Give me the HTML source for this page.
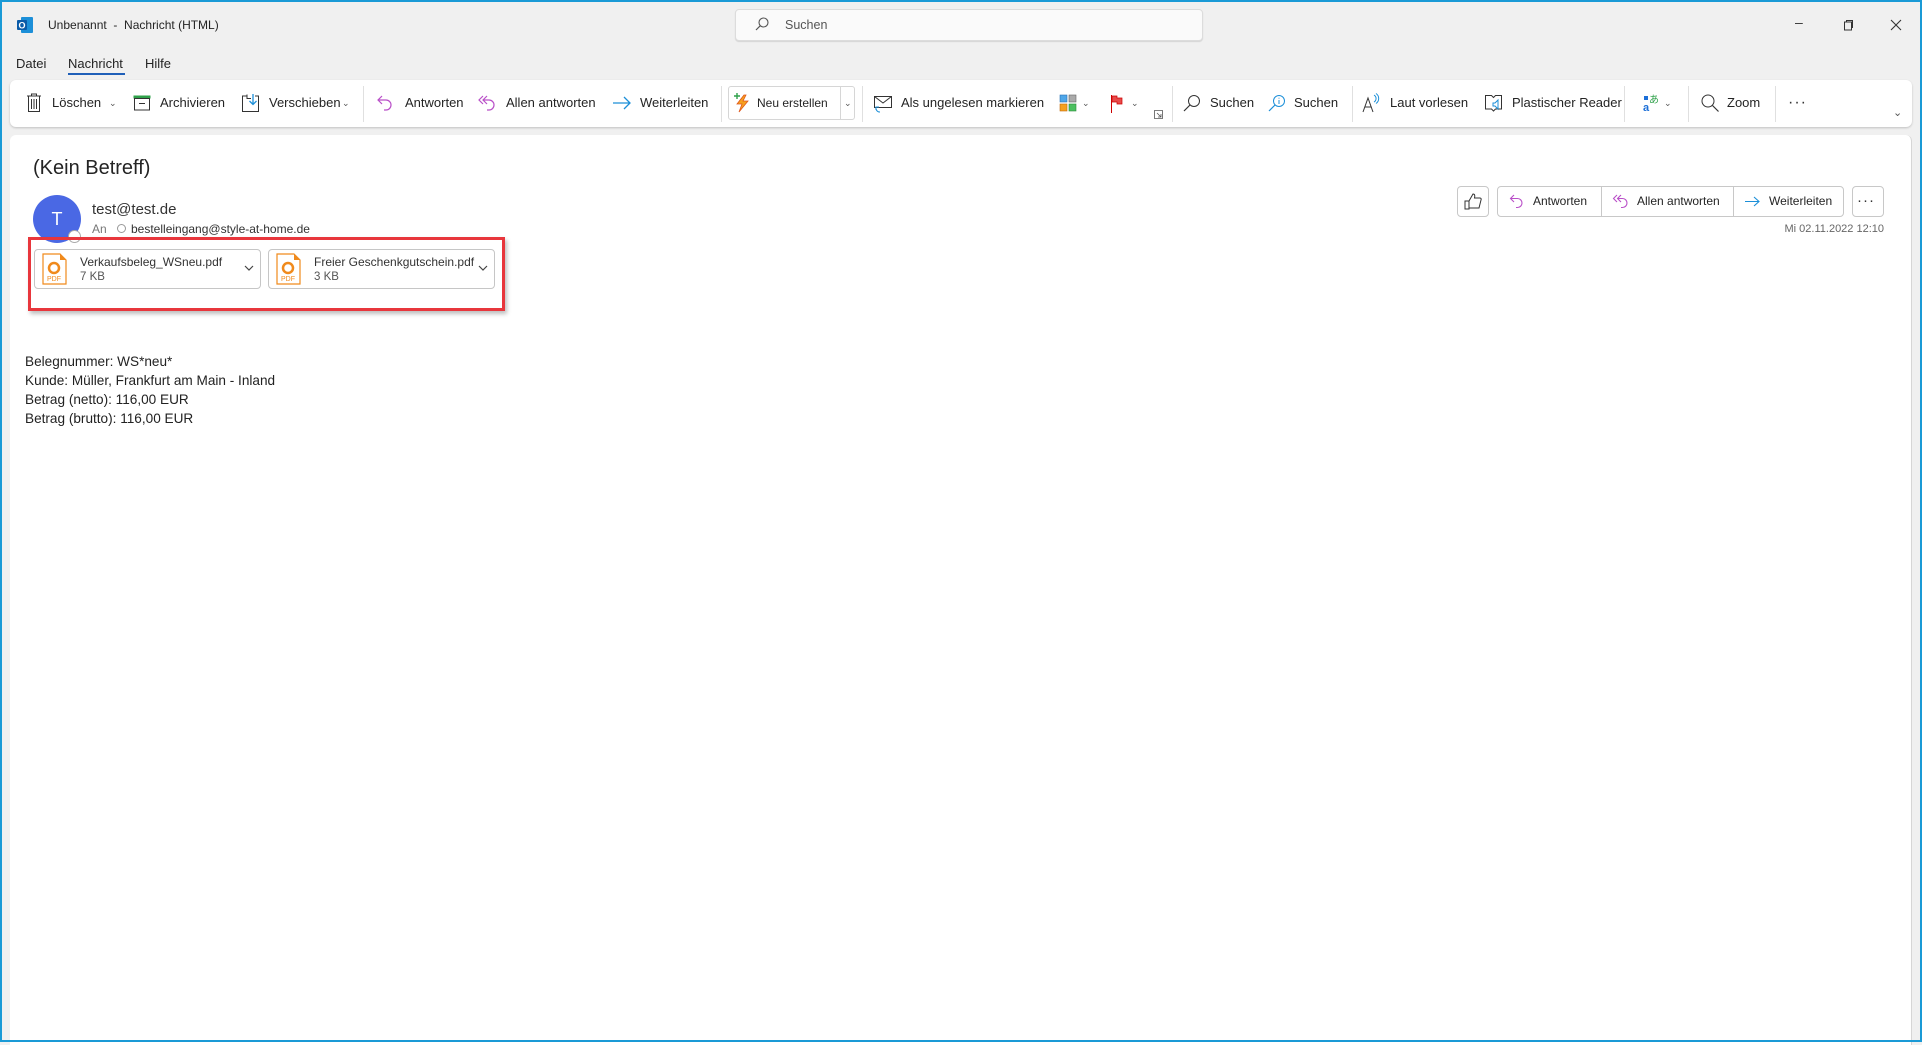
<!DOCTYPE html>
<html><head><meta charset="utf-8"><style>
*{margin:0;padding:0;box-sizing:border-box}
body{width:1922px;height:1042px;background:#f0f0f0;font-family:"Liberation Sans",sans-serif;color:#242424;position:relative;overflow:hidden;font-size:13px}
.a{position:absolute;white-space:nowrap}
.frame{position:absolute;inset:0;border:2px solid #1a9ad6;border-bottom-width:2px;pointer-events:none}
.rib{position:absolute;left:10px;top:80px;width:1902px;height:47px;background:#fff;border-radius:6px;box-shadow:0 1px 2px rgba(0,0,0,.2)}
.t{position:absolute;top:95px;font-size:13px;color:#242424;white-space:nowrap}
.sep{position:absolute;top:86px;width:1px;height:36px;background:#e0e0e0}
.chev{position:absolute;font-size:9px;color:#555}
.panel{position:absolute;left:10px;top:135px;width:1902px;height:910px;background:#fff;border-radius:6px 6px 0 0;border-right:1px solid #d6d6d6}
svg{position:absolute}
.btn{position:absolute;top:186px;height:31px;border:1px solid #c8c8c8;border-radius:4px;background:#fff}
.att{position:absolute;top:249px;width:227px;height:40px;border:1px solid #c6c6c6;border-radius:4px;background:#fff}
</style></head><body>
<svg style="left:16px;top:16px" width="18" height="18" viewBox="0 0 18 18"><rect x="5" y="1" width="12" height="16" rx="1" fill="#1c8fd8"/><rect x="1" y="4" width="10" height="10" rx="1" fill="#0a5ba8"/><text x="6" y="12.5" font-size="9" fill="#fff" text-anchor="middle" font-family="Liberation Sans" font-weight="bold">O</text></svg>
<div class="a" style="left:48px;top:18px;font-size:12px">Unbenannt &nbsp;- &nbsp;Nachricht (HTML)</div>
<div class="a" style="left:735px;top:9px;width:468px;height:32px;background:#fafafa;border:1px solid #dcdcdc;border-radius:4px;box-shadow:0 1px 1px rgba(0,0,0,.12)"></div>
<svg style="left:754px;top:16px" width="16" height="16" viewBox="0 0 16 16"><circle cx="9.5" cy="6.5" r="4.5" fill="none" stroke="#555" stroke-width="1.1"/><path d="M6.3 9.7L2 14" stroke="#555" stroke-width="1.2"/></svg>
<div class="a" style="left:785px;top:18px;font-size:12.5px;color:#555">Suchen</div>
<div class="a" style="left:1795px;top:14px;font-size:14px;color:#333">–</div>
<svg style="left:1843px;top:19px" width="12" height="12" viewBox="0 0 12 12"><rect x="1.5" y="3" width="7" height="8" fill="none" stroke="#333"/><path d="M3.5 3V1.5h6v7H8.5" fill="none" stroke="#333"/></svg>
<svg style="left:1890px;top:19px" width="12" height="12" viewBox="0 0 12 12"><path d="M1 1L11 11M11 1L1 11" stroke="#333" stroke-width="1.1"/></svg>
<div class="a" style="left:16px;top:56px;font-size:13px">Datei</div>
<div class="a" style="left:68px;top:56px;font-size:13px">Nachricht</div>
<div class="a" style="left:68px;top:73px;width:57px;height:2px;background:#1f5fb8"></div>
<div class="a" style="left:145px;top:56px;font-size:13px">Hilfe</div>
<div class="rib"></div>
<svg style="left:26px;top:93px" width="16" height="20" viewBox="0 0 16 20"><path d="M1 3h14M5.5 3V1h5v2M2.5 3v15.5h11V3M5.5 6v10M8 6v10M10.5 6v10" fill="none" stroke="#333" stroke-width="1"/></svg>
<div class="t" style="left:52px">Löschen</div><div class="chev" style="left:109px;top:98px">⌄</div>
<svg style="left:133px;top:95px" width="18" height="16" viewBox="0 0 18 16"><rect x="0.5" y="0.5" width="17" height="3" fill="#2fa14a"/><rect x="1.5" y="3.5" width="15" height="11.5" fill="none" stroke="#333"/><path d="M6 8.5h6" stroke="#333"/></svg>
<div class="t" style="left:160px">Archivieren</div>
<svg style="left:241px;top:93px" width="20" height="20" viewBox="0 0 20 20"><path d="M6 3H1.5v15.5h16V3H14" fill="none" stroke="#333"/><path d="M6 1.5v4h4" fill="none" stroke="#333"/><path d="M12 1v10M8.5 8l3.5 3.5 3.5-3.5" fill="none" stroke="#1c8fd8" stroke-width="1.3"/></svg>
<div class="t" style="left:269px">Verschieben</div><div class="chev" style="left:342px;top:98px">⌄</div>
<div class="sep" style="left:363px"></div>
<svg style="left:376px;top:94px" width="18" height="18" viewBox="0 0 18 18"><path d="M6 2L2 6l4 4M2 6h8a5 5 0 0 1 0 10H8" fill="none" stroke="#b94fc8" stroke-width="1.2"/></svg>
<div class="t" style="left:405px">Antworten</div>
<svg style="left:477px;top:94px" width="20" height="18" viewBox="0 0 20 18"><path d="M6 2L2 6l4 4M10 2L6 6l4 4M6 6h6a5 5 0 0 1 0 10h-2" fill="none" stroke="#b94fc8" stroke-width="1.2"/></svg>
<div class="t" style="left:506px">Allen antworten</div>
<svg style="left:612px;top:96px" width="20" height="14" viewBox="0 0 20 14"><path d="M1 7h17M12 1l6 6-6 6" fill="none" stroke="#1c8fd8" stroke-width="1.3"/></svg>
<div class="t" style="left:640px">Weiterleiten</div>
<div class="sep" style="left:721px"></div>
<div class="a" style="left:728px;top:86px;width:127px;height:34px;border:1px solid #d6d6d6;border-radius:3px"></div>
<div class="a" style="left:840px;top:86px;width:1px;height:34px;background:#d6d6d6"></div>
<svg style="left:733px;top:92px" width="18" height="22" viewBox="0 0 18 22"><path d="M11 3L4 12h5l-3 8 9-11h-5l3-6z" fill="#f5a01f" stroke="#e0561a" stroke-width=".8"/><path d="M4 1v6M1 4h6" stroke="#2fa14a" stroke-width="1.4"/></svg>
<div class="t" style="left:757px;font-size:12px;top:96px">Neu erstellen</div><div class="chev" style="left:844px;top:98px">⌄</div>
<div class="sep" style="left:862px"></div>
<svg style="left:873px;top:94px" width="20" height="20" viewBox="0 0 20 20"><rect x="1.5" y="2.5" width="17" height="11" fill="none" stroke="#333"/><path d="M1.5 2.5l8.5 6.5 8.5-6.5" fill="none" stroke="#333"/><path d="M3 13a4 4 0 0 0 4 5M3 16v-3h3" fill="none" stroke="#1c8fd8"/></svg>
<div class="t" style="left:901px">Als ungelesen markieren</div>
<svg style="left:1059px;top:94px" width="18" height="18" viewBox="0 0 18 18"><rect x="1" y="1" width="7" height="7" fill="#4ea6e8" stroke="#2a6fb5" stroke-width=".6"/><rect x="10" y="1" width="7" height="7" fill="#aaa" stroke="#666" stroke-width=".6"/><rect x="1" y="10" width="7" height="7" fill="#f5a01f" stroke="#c06a10" stroke-width=".6"/><rect x="10" y="10" width="7" height="7" fill="#4cc060" stroke="#2a8a3a" stroke-width=".6"/></svg>
<div class="chev" style="left:1082px;top:98px">⌄</div>
<svg style="left:1110px;top:94px" width="14" height="20" viewBox="0 0 14 20"><path d="M1.5 1v18" stroke="#c00" stroke-width="1"/><path d="M2 2h5v2h5v6H7V8H2z" fill="#e84a4a" stroke="#c00" stroke-width=".7"/></svg>
<div class="chev" style="left:1131px;top:98px">⌄</div>
<svg style="left:1154px;top:110px" width="9" height="9" viewBox="0 0 9 9"><path d="M.5 .5h8v8h-8z" fill="none" stroke="#555" stroke-width=".8"/><path d="M3 3l4 4M7 4v3H4" fill="none" stroke="#555" stroke-width=".8"/></svg>
<div class="sep" style="left:1172px"></div>
<svg style="left:1183px;top:94px" width="18" height="18" viewBox="0 0 18 18"><circle cx="11" cy="7" r="5.5" fill="none" stroke="#333"/><path d="M7 11l-6 6" stroke="#333" stroke-width="1.2"/></svg>
<div class="t" style="left:1210px">Suchen</div>
<svg style="left:1268px;top:94px" width="18" height="18" viewBox="0 0 18 18"><circle cx="11" cy="7" r="5.5" fill="none" stroke="#1c8fd8"/><path d="M7 11l-6 6" stroke="#1c8fd8" stroke-width="1.2"/><path d="M11 6v4M11 3.8v.8" stroke="#1c8fd8"/></svg>
<div class="t" style="left:1294px">Suchen</div>
<div class="sep" style="left:1352px"></div>
<svg style="left:1362px;top:93px" width="20" height="20" viewBox="0 0 20 20"><path d="M1 19L6 5l5 14M3 14h6" fill="none" stroke="#333"/><path d="M12 2a4 4 0 0 1 0 7M14 0.5a6 6 0 0 1 0 10" fill="none" stroke="#1c8fd8"/></svg>
<div class="t" style="left:1390px">Laut vorlesen</div>
<svg style="left:1484px;top:93px" width="20" height="20" viewBox="0 0 20 20"><path d="M1.5 2.5h6l2 2 2-2h6V16h-6l-2 2-2-2h-6z" fill="none" stroke="#333"/><path d="M9 10h2l3-3v9l-3-3H9z" fill="none" stroke="#1c8fd8"/></svg>
<div class="t" style="left:1512px">Plastischer Reader</div>
<div class="sep" style="left:1624px"></div>
<svg style="left:1643px;top:93px" width="18" height="20" viewBox="0 0 18 20"><text x="0" y="18" font-size="11" fill="#1c6fd8" font-family="Liberation Sans" font-weight="bold">a</text><text x="6" y="10" font-size="10" fill="#2fa14a" font-family="Noto Sans CJK JP">あ</text><rect x="1" y="3" width="4" height="4" fill="#1c6fd8"/></svg>
<div class="chev" style="left:1664px;top:98px">⌄</div>
<div class="sep" style="left:1688px"></div>
<svg style="left:1700px;top:93px" width="20" height="20" viewBox="0 0 20 20"><circle cx="8" cy="8" r="6" fill="none" stroke="#333"/><path d="M12.5 12.5l6 6" stroke="#333" stroke-width="1.2"/></svg>
<div class="t" style="left:1727px">Zoom</div>
<div class="sep" style="left:1775px"></div>
<div class="a" style="left:1788px;top:94px;font-size:16px;letter-spacing:1px;color:#333">···</div>
<div class="chev" style="left:1893px;top:106px;font-size:11px">⌄</div>
<div class="panel"></div>
<div class="a" style="left:33px;top:157px;font-size:20px;color:#242424">(Kein Betreff)</div>
<div class="a" style="left:33px;top:195px;width:48px;height:48px;border-radius:50%;background:#4a68e4;color:#fff;font-size:18px;text-align:center;line-height:48px">T</div>
<div class="a" style="left:68px;top:230px;width:13px;height:13px;border-radius:50%;background:#fff;border:1px solid #aaa"></div>
<div class="a" style="left:92px;top:201px;font-size:15px;color:#333">test@test.de</div>
<div class="a" style="left:92px;top:222px;font-size:12px;color:#777">An</div>
<div class="a" style="left:117px;top:224px;width:9px;height:9px;border-radius:50%;border:1px solid #999"></div>
<div class="a" style="left:131px;top:222px;font-size:12px;color:#333">bestelleingang@style-at-home.de</div>
<div class="a" style="left:28px;top:237px;width:477px;height:74px;border:3px solid #e8363c;box-shadow:2px 3px 4px rgba(0,0,0,.25)"></div>
<div class="att" style="left:34px"></div>
<div class="att" style="left:268px"></div>
<svg style="left:42px;top:253px" width="26" height="32" viewBox="0 0 26 32"><path d="M1 1h17l6 6v24H1z" fill="#fff" stroke="#f08a1c" stroke-width="1.2"/><path d="M18 1l6 6h-6z" fill="#f08a1c"/><circle cx="12" cy="15" r="5" fill="none" stroke="#f08a1c" stroke-width="2.5"/><text x="12" y="28" font-size="7" fill="#f08a1c" text-anchor="middle" font-family="Liberation Sans">PDF</text></svg>
<svg style="left:276px;top:253px" width="26" height="32" viewBox="0 0 26 32"><path d="M1 1h17l6 6v24H1z" fill="#fff" stroke="#f08a1c" stroke-width="1.2"/><path d="M18 1l6 6h-6z" fill="#f08a1c"/><circle cx="12" cy="15" r="5" fill="none" stroke="#f08a1c" stroke-width="2.5"/><text x="12" y="28" font-size="7" fill="#f08a1c" text-anchor="middle" font-family="Liberation Sans">PDF</text></svg>
<div class="a" style="left:80px;top:255px;font-size:12px;color:#333">Verkaufsbeleg_WSneu.pdf</div>
<div class="a" style="left:80px;top:271px;font-size:11.5px;color:#555">7 KB</div>
<div class="a" style="left:314px;top:255px;font-size:12px;color:#333">Freier Geschenkgutschein.pdf</div>
<div class="a" style="left:314px;top:271px;font-size:11.5px;color:#555">3 KB</div>
<svg style="left:244px;top:265px" width="10" height="6" viewBox="0 0 10 6"><path d="M1 1l4 4 4-4" fill="none" stroke="#444" stroke-width="1.2"/></svg>
<svg style="left:478px;top:265px" width="10" height="6" viewBox="0 0 10 6"><path d="M1 1l4 4 4-4" fill="none" stroke="#444" stroke-width="1.2"/></svg>
<div class="a" style="left:25px;top:352px;font-size:13.6px;line-height:19px;color:#222">Belegnummer: WS*neu*<br>Kunde: Müller, Frankfurt am Main - Inland<br>Betrag (netto): 116,00 EUR<br>Betrag (brutto): 116,00 EUR</div>
<div class="btn" style="left:1457px;width:32px"></div>
<svg style="left:1464px;top:193px" width="18" height="17" viewBox="0 0 18 17"><path d="M1 8h4v8H1zM5 8l4-7c2 0 2 2 1.5 4H16c1 0 1.5 1 1 2l-2 8H5" fill="none" stroke="#333"/></svg>
<div class="btn" style="left:1497px;width:347px"></div>
<div class="a" style="left:1601px;top:186px;width:1px;height:31px;background:#c8c8c8"></div>
<div class="a" style="left:1733px;top:186px;width:1px;height:31px;background:#c8c8c8"></div>
<svg style="left:1509px;top:194px" width="16" height="15" viewBox="0 0 16 15"><path d="M5 1L1.5 4.5 5 8M1.5 4.5h7a4.5 4.5 0 0 1 0 9H7" fill="none" stroke="#b94fc8" stroke-width="1.1"/></svg>
<div class="a" style="left:1533px;top:194px;font-size:12px">Antworten</div>
<svg style="left:1612px;top:194px" width="18" height="15" viewBox="0 0 18 15"><path d="M5 1L1.5 4.5 5 8M9 1L5.5 4.5 9 8M5.5 4.5h5a4.5 4.5 0 0 1 0 9H9" fill="none" stroke="#b94fc8" stroke-width="1.1"/></svg>
<div class="a" style="left:1637px;top:194px;font-size:12px">Allen antworten</div>
<svg style="left:1744px;top:196px" width="17" height="11" viewBox="0 0 17 11"><path d="M1 5.5h14M10 1l5 4.5L10 10" fill="none" stroke="#1c8fd8" stroke-width="1.1"/></svg>
<div class="a" style="left:1769px;top:194px;font-size:12px">Weiterleiten</div>
<div class="btn" style="left:1852px;width:32px"></div>
<div class="a" style="left:1857px;top:192px;font-size:15px;letter-spacing:1px;color:#333">···</div>
<div class="a" style="left:1784px;top:223px;font-size:11px;color:#666;width:100px;text-align:right">Mi 02.11.2022 12:10</div>
<div class="frame"></div>
</body></html>
